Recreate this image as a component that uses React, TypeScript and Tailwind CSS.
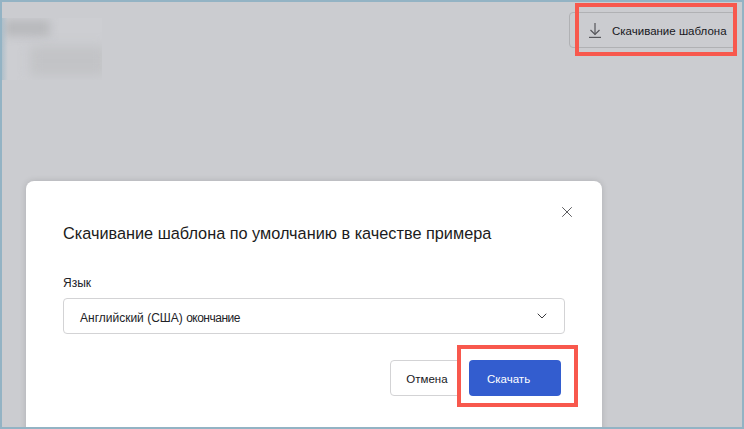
import { X, ChevronDown } from "lucide-react";

function DownloadIcon() {
  return (
    <svg width="12" height="15" viewBox="0 0 12 15" fill="none" stroke="#55555a" strokeWidth="1.2">
      <path d="M6 0V11.5" />
      <path d="M1.5 7L6 11.5L10.5 7" />
      <path d="M0 14.4H12" />
    </svg>
  );
}

function Header() {
  return (
    <div className="flex h-[179px] items-start justify-between">
      <div className="relative ml-[-2px] mt-[16px] h-[62px] w-[102px] overflow-hidden bg-[#cdced2]">
        <div className="absolute left-[4px] top-[2px] h-[16px] w-[46px] bg-[#b8b9bc] blur-[5px]" />
        <div className="absolute left-[30px] top-[28px] h-[30px] w-[76px] bg-[#c2c3c6] blur-[6px]" />
        <div className="absolute left-0 top-0 h-full w-[8px] bg-gradient-to-r from-[#a6bbc8] to-transparent" />
      </div>
      <button className="relative mr-[6px] mt-[10px] flex h-[36px] w-[167px] items-center rounded-[4px] border border-[#b0b1b4] pl-[19px] text-[11.5px] text-[#17171c]">
        <DownloadIcon />
        <span className="ml-[11px] mt-[4px] whitespace-nowrap">Скачивание шаблона</span>
        <span className="absolute left-[5px] top-[-10px] h-[53px] w-[162px] border-4 border-[#f8584d]" />
      </button>
    </div>
  );
}

function DownloadDialog() {
  return (
    <div className="relative ml-[24px] h-[260px] w-[576px] rounded-t-[8px] bg-white px-[37px] shadow-[0_0_6px_rgba(0,0,0,0.15)]">
      <button className="absolute right-[26px] top-[22px] text-[#3a3a3e]">
        <X className="h-[18px] w-[18px]" strokeWidth={1.1} />
      </button>
      <h2 className="pt-[40px] text-[16.3px] leading-[24px] text-[#1b1b20]">
        Скачивание шаблона по умолчанию в качестве примера
      </h2>
      <div className="mt-[30px] text-[12px] leading-[16px] text-[#222227]">Язык</div>
      <div className="mt-[7px] flex h-[36px] w-[502px] items-center justify-between rounded-[4px] border border-[#d3d3d5] pl-[16px] pr-[14px] text-[12px] text-[#222227]">
        <span className="mt-[4px]">
          Английский (США) <span className="tracking-[-0.5px]">окончание</span>
        </span>
        <ChevronDown className="h-[16px] w-[16px] text-[#3a3a3e]" strokeWidth={1.5} />
      </div>
      <div className="mt-[26px] flex w-[498px] justify-end gap-[8px] text-[11.5px]">
        <button className="h-[36px] w-[71px] rounded-[4px] border border-[#d3d3d5] bg-white pl-[3px] pt-[4px] text-[#17171c]">
          Отмена
        </button>
        <button className="relative h-[36px] w-[92px] rounded-[4px] bg-[#335dcf] pl-[18px] pt-[4px] text-left text-white">
          Скачать
          <span className="absolute left-[-12px] top-[-15px] h-[62px] w-[121px] border-4 border-[#f8584d]" />
        </button>
      </div>
    </div>
  );
}

export default function App() {
  return (
    <div className="h-[429px] w-[744px] overflow-hidden border-2 border-[#93b3c4] bg-[#cbccd0] font-['Liberation_Sans',sans-serif]">
      <Header />
      <DownloadDialog />
    </div>
  );
}
